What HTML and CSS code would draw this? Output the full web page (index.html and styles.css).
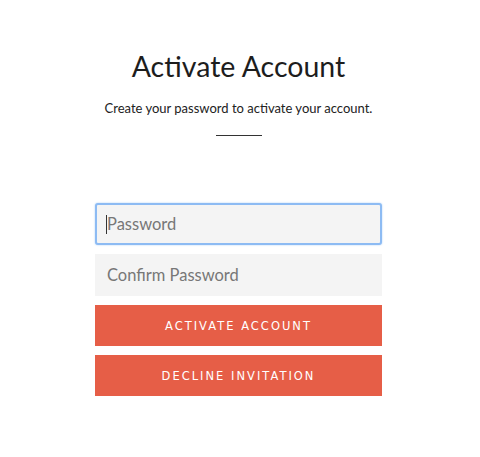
FILE: index.html
```html
<!DOCTYPE html>
<html lang="en">
<head>
    <meta charset="UTF-8">
    <meta name="viewport" content="width=device-width, initial-scale=1.0">
    <title>Activate Account</title>
    <link rel="stylesheet" href="styles.css">
</head>
<body>

<div class="page">
    <h1>Activate Account</h1>
    <p class="intro">Create your password to activate your account.</p>
    <hr class="divider">

    <!-- Formulario de activación -->
    <form class="activate-form">
        <div class="field focused">
            <input type="password" placeholder="Password">
        </div>
        <div class="field">
            <input type="password" placeholder="Confirm Password">
        </div>
        <button type="button">Activate Account</button>
        <button type="button">Decline Invitation</button>
    </form>
</div>

</body>
</html>
```

FILE: styles.css
```css
body {
    margin: 0;
    background-color: #fff;
    font-family: Lato, "Open Sans", sans-serif;
    color: #222;
}
.page {
    width: 287px;
    margin: 0 0 0 95px;
    padding-top: 49px;
    text-align: center;
}
h1 {
    margin: 0;
    font-size: 28.5px;
    font-weight: 400;
    line-height: 34px;
    color: #1d1d1d;
}
.intro {
    margin: 17px 0 0;
    font-size: 13px;
    line-height: 16px;
    color: #222;
}
.divider {
    width: 46px;
    margin: 19px auto 0;
    border: none;
    border-top: 1px solid #333;
}
.activate-form {
    display: flex;
    flex-direction: column;
    gap: 9px;
    margin-top: 67px;
}
.field {
    position: relative;
}
.field input {
    display: block;
    box-sizing: border-box;
    width: 100%;
    height: 42px;
    padding: 0 12px;
    border: none;
    background-color: #f4f4f4;
    font-family: Lato, "Open Sans", sans-serif;
    font-size: 16.5px;
    color: #333;
    outline: none;
}
.field input::placeholder {
    color: #777;
}
.field.focused input {
    border: 2px solid #8dbbf3;
    border-radius: 3px;
    padding-left: 10px;
    box-shadow: 0 0 2px #a9cdf7;
}
.field.focused::after {
    content: "";
    position: absolute;
    left: 11px;
    top: 12px;
    width: 1px;
    height: 19px;
    background-color: #333;
}
button {
    display: block;
    width: 100%;
    height: 41px;
    border: none;
    background-color: #e65e47;
    color: #fff;
    font-family: "DejaVu Sans", sans-serif;
    font-size: 11.5px;
    letter-spacing: 2px;
    text-transform: uppercase;
    cursor: pointer;
}
```
